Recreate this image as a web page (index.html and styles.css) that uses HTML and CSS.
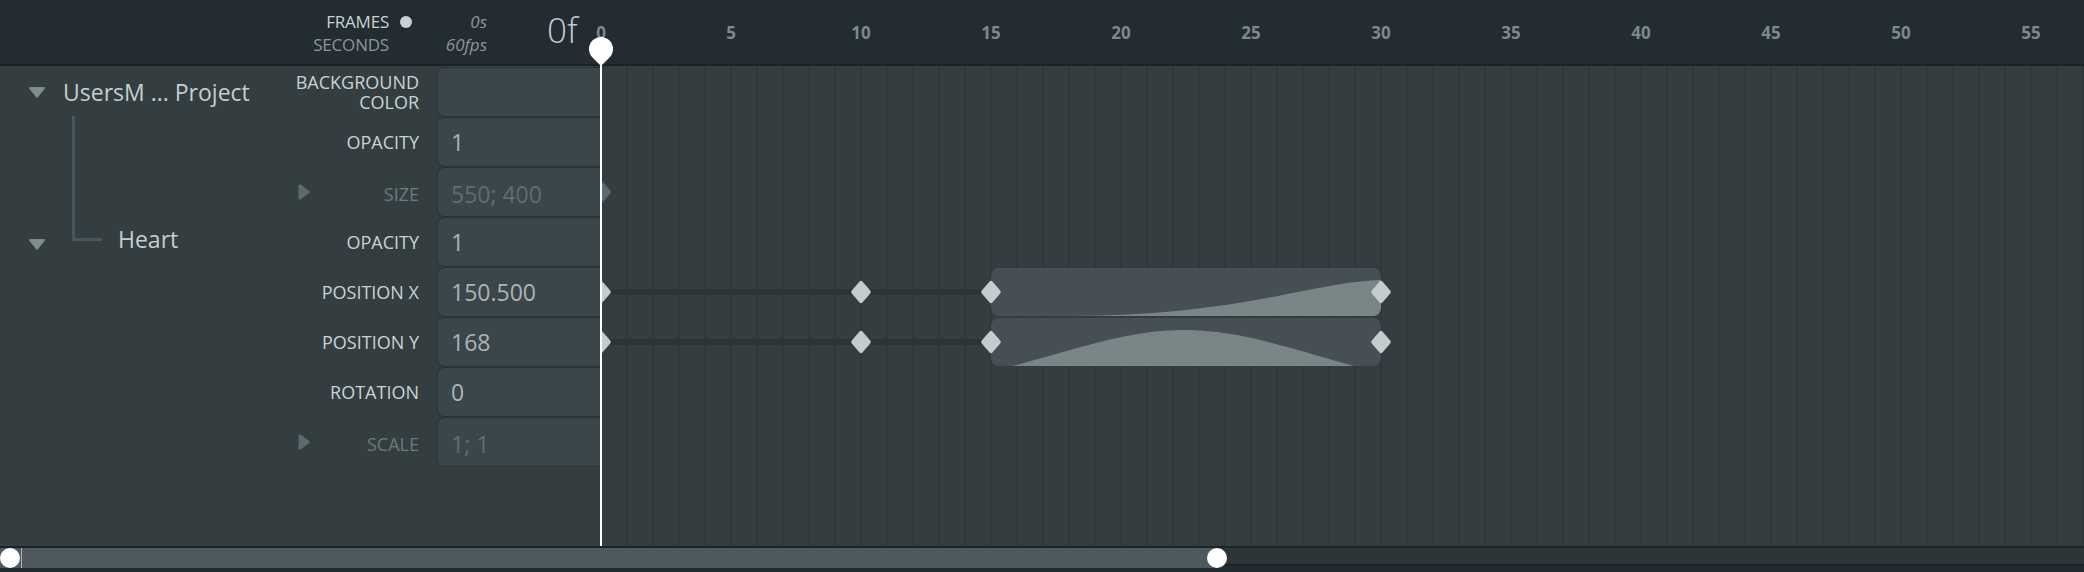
FILE: index.html
```html
<!DOCTYPE html>
<html>
<head>
<meta charset="utf-8">
<link rel="stylesheet" href="styles.css">
</head>
<body>
<div class="app">
  <header class="topbar">
    <div class="mode">
      <span class="mode-label active">FRAMES</span><span class="dot"></span>
      <span class="mode-label">SECONDS</span><span></span>
    </div>
    <div class="time"><span>0s</span><span>60fps</span></div>
    <div class="current">0f</div>
    <div class="ruler">
      <span class="tick"><b>0</b></span>
      <span class="tick"><b>5</b></span>
      <span class="tick"><b>10</b></span>
      <span class="tick"><b>15</b></span>
      <span class="tick"><b>20</b></span>
      <span class="tick"><b>25</b></span>
      <span class="tick"><b>30</b></span>
      <span class="tick"><b>35</b></span>
      <span class="tick"><b>40</b></span>
      <span class="tick"><b>45</b></span>
      <span class="tick"><b>50</b></span>
      <span class="tick"><b>55</b></span>
    </div>
  </header>

  <main class="main">
    <div class="tree">
      <div class="layer root">
        <svg class="caret" viewBox="0 0 18 12"><path d="M2 2 L16 2 L9 10.5 Z"/></svg>
        <span class="name">UsersM ... Project</span>
      </div>
      <div class="layer child">
        <svg class="caret" viewBox="0 0 18 12"><path d="M2 2 L16 2 L9 10.5 Z"/></svg>
        <span class="name">Heart</span>
      </div>
    </div>

    <div class="props">
      <div class="prow">
        <div class="plabel"><span>BACKGROUND COLOR</span></div>
        <div class="pvalue"></div>
      </div>
      <div class="prow">
        <div class="plabel"><span>OPACITY</span></div>
        <div class="pvalue">1</div>
      </div>
      <div class="prow dim">
        <div class="plabel"><svg class="pcaret" viewBox="0 0 12 16"><path d="M2 2 L10 8 L2 14 Z"/></svg><span>SIZE</span></div>
        <div class="pvalue">550; 400</div>
      </div>
      <div class="prow">
        <div class="plabel"><span>OPACITY</span></div>
        <div class="pvalue">1</div>
      </div>
      <div class="prow">
        <div class="plabel"><span>POSITION X</span></div>
        <div class="pvalue">150.500</div>
      </div>
      <div class="prow">
        <div class="plabel"><span>POSITION Y</span></div>
        <div class="pvalue">168</div>
      </div>
      <div class="prow">
        <div class="plabel"><span>ROTATION</span></div>
        <div class="pvalue">0</div>
      </div>
      <div class="prow dim">
        <div class="plabel"><svg class="pcaret" viewBox="0 0 12 16"><path d="M2 2 L10 8 L2 14 Z"/></svg><span>SCALE</span></div>
        <div class="pvalue">1; 1</div>
      </div>
    </div>

    <div class="timeline">
      <div class="trow"></div>
      <div class="trow"></div>
      <div class="trow"><span class="key dim" style="--f:0"></span></div>
      <div class="trow"></div>
      <div class="trow">
        <span class="bar" style="--from:0;--to:15"></span>
        <span class="ease" style="--from:15;--to:30">
          <svg viewBox="0 0 390 48" preserveAspectRatio="none"><path d="M76 48 C250 48 320 14 390 12 L390 48 Z"/></svg>
        </span>
        <span class="key" style="--f:0"></span>
        <span class="key" style="--f:10"></span>
        <span class="key" style="--f:15"></span>
        <span class="key" style="--f:30"></span>
      </div>
      <div class="trow">
        <span class="bar" style="--from:0;--to:15"></span>
        <span class="ease" style="--from:15;--to:30">
          <svg viewBox="0 0 390 48" preserveAspectRatio="none"><path d="M22 48 C95 28 140 12 193 12 C246 12 292 28 363 48 Z"/></svg>
        </span>
        <span class="key" style="--f:0"></span>
        <span class="key" style="--f:10"></span>
        <span class="key" style="--f:15"></span>
        <span class="key" style="--f:30"></span>
      </div>
      <div class="trow"></div>
      <div class="trow"></div>
    </div>
  </main>

  <footer class="scroll">
    <div class="track">
      <div class="thumb">
        <span class="knob"></span>
        <span class="marker"></span>
        <span class="knob end"></span>
      </div>
    </div>
  </footer>

  <div class="playhead"></div>
</div>
</body>
</html>
```

FILE: styles.css
```css
html, body {
  margin: 0;
  padding: 0;
  background: #343e41;
}

body {
  font-family: "Open Sans", "Noto Sans", sans-serif;
}

.app {
  width: 2084px;
  height: 572px;
  position: relative;
  overflow: hidden;
  display: flex;
  flex-direction: column;
}

/* ---------- top bar ---------- */
.topbar {
  height: 64px;
  flex-shrink: 0;
  background: #232c31;
  border-bottom: 2px solid #1a2226;
  display: flex;
}

.mode {
  width: 412px;
  flex-shrink: 0;
  box-sizing: border-box;
  padding-top: 10px;
  display: grid;
  grid-template-columns: 1fr 12px;
  column-gap: 11px;
  align-content: start;
  font-size: 17px;
  line-height: 23px;
}

.mode-label {
  text-align: right;
  color: #8b9799;
  letter-spacing: -0.2px;
}

.mode-label.active {
  color: #c8d1d3;
}

.dot {
  width: 12px;
  height: 12px;
  border-radius: 50%;
  background: #c8d1d3;
  align-self: center;
}

.time {
  width: 75px;
  flex-shrink: 0;
  box-sizing: border-box;
  padding-top: 10px;
  display: flex;
  flex-direction: column;
  align-items: flex-end;
  font-size: 17px;
  line-height: 23px;
  font-style: italic;
  color: #8b9799;
}

.current {
  margin-left: 60px;
  width: 54px;
  flex-shrink: 0;
  font-size: 35px;
  font-weight: 300;
  line-height: 60px;
  color: #c3cccd;
}

.ruler {
  display: flex;
  align-items: center;
}

.tick {
  width: 130px;
  flex-shrink: 0;
  font-size: 17px;
  color: #7d898b;
}

.tick b {
  display: inline-block;
  font-weight: 700;
  transform: translateX(-50%);
}

/* ---------- main ---------- */
.main {
  flex: 1;
  display: grid;
  grid-template-columns: 280px 321px 1fr;
  padding-top: 1px;
  min-height: 0;
}

.tree {
  display: flex;
  flex-direction: column;
}

.layer {
  height: 50px;
  display: flex;
  align-items: center;
  position: relative;
  font-size: 23px;
  color: #c4cecf;
}

.layer.root {
  margin-bottom: 97px;
}

.caret {
  width: 18px;
  height: 12px;
  margin-left: 28px;
  flex-shrink: 0;
}

.caret path {
  fill: #7e8c8e;
  stroke: #7e8c8e;
  stroke-width: 2;
  stroke-linejoin: round;
}

.child .caret {
  margin-top: 9px;
}

.root .name {
  margin-left: 17px;
}

.child .name {
  margin-left: 72px;
}

.child::before {
  content: "";
  position: absolute;
  left: 72px;
  top: -98px;
  width: 27px;
  height: 122px;
  border-left: 3px solid #45575a;
  border-bottom: 3px solid #45575a;
}

/* ---------- properties ---------- */
.props {
  display: flex;
  flex-direction: column;
  position: relative;
  z-index: 2;
}

.prow {
  height: 50px;
  display: flex;
}

.plabel {
  flex: 1;
  display: flex;
  align-items: center;
  justify-content: flex-end;
  padding-right: 18px;
  font-size: 18px;
  line-height: 20px;
  color: #c9d3d4;
  text-align: right;
}

.prow.dim .plabel {
  color: #6b7b7d;
  padding-top: 3px;
}

.pcaret {
  width: 12px;
  height: 16px;
  margin-left: 18px;
  margin-right: auto;
  margin-top: -3px;
  flex-shrink: 0;
}

.pcaret path {
  fill: #5b6b6d;
  stroke: #5b6b6d;
  stroke-width: 3;
  stroke-linejoin: round;
}

.pvalue {
  width: 164px;
  flex-shrink: 0;
  box-sizing: border-box;
  border: 1px solid #2b3437;
  border-right: 0;
  border-radius: 7px 0 0 7px;
  background: #3b464a;
  padding-left: 13px;
  display: flex;
  align-items: center;
  font-size: 23px;
  color: #aab5b6;
}

.prow.dim .pvalue {
  color: #5d6e70;
  padding-top: 3px;
}

/* ---------- timeline ---------- */
.timeline {
  position: relative;
  z-index: 1;
  margin-top: -1px;
  padding-top: 1px;
  background-image: linear-gradient(to right, #2e383a 2px, transparent 2px);
  background-size: 26px 100%;
  background-position: 25px 0;
  display: flex;
  flex-direction: column;
}

.trow {
  height: 50px;
  flex-shrink: 0;
  position: relative;
}

.bar {
  position: absolute;
  left: calc(var(--from) * 26px);
  width: calc((var(--to) - var(--from)) * 26px);
  top: 22px;
  height: 6px;
  background: #2b3437;
}

.ease {
  position: absolute;
  left: calc(var(--from) * 26px);
  width: calc((var(--to) - var(--from)) * 26px);
  top: 1px;
  bottom: 1px;
  border-radius: 8px;
  background: #465054;
  overflow: hidden;
}

.ease svg {
  display: block;
  width: 100%;
  height: 100%;
}

.ease path {
  fill: #7a8587;
}

.key {
  position: absolute;
  left: calc(var(--f) * 26px);
  top: 25px;
  width: 15px;
  height: 15px;
  border-radius: 2px;
  background: #c3cdcf;
  transform: translate(-50%, -50%) scaleY(1.14) rotate(45deg);
  z-index: 2;
}

.key.dim {
  background: #5b6b6d;
}

/* ---------- scrollbar ---------- */
.scroll {
  height: 26px;
  flex-shrink: 0;
  box-sizing: border-box;
  border-top: 2px solid #1b2326;
  background: #222b2f;
}

.track {
  height: 18px;
  box-sizing: border-box;
  background: #2c3639;
  border-bottom: 2px solid #1c2427;
  display: flex;
}

.thumb {
  width: 1217px;
  height: 20px;
  flex-shrink: 0;
  background: #4e595f;
  display: flex;
  align-items: center;
}

.knob {
  width: 20px;
  height: 20px;
  border-radius: 50%;
  background: #ffffff;
  flex-shrink: 0;
}

.knob.end {
  margin-left: auto;
  margin-right: -10px;
}

.marker {
  width: 1px;
  height: 20px;
  margin-left: 1px;
  background: #a9b2b4;
}

/* ---------- playhead ---------- */
.playhead {
  position: absolute;
  left: 600px;
  top: 60px;
  width: 2px;
  height: 486px;
  background: #ffffff;
  z-index: 5;
}

.playhead::before {
  content: "";
  position: absolute;
  left: -11px;
  top: -23px;
  width: 24px;
  height: 24px;
  background: #ffffff;
  border-radius: 50% 50% 0 50%;
  transform: rotate(45deg);
}
```
